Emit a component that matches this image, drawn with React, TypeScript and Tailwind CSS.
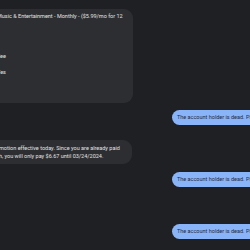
import React from "react";

const font = { fontFamily: "Roboto, 'Noto Sans', sans-serif" };

function Line({ children }: { children?: React.ReactNode }) {
  return <div className="h-[8px] leading-[8px] whitespace-nowrap">{children ?? "\u00a0"}</div>;
}

function Blue() {
  return (
    <div className="flex justify-end">
      <div className="ml-[172px] w-[120px] shrink-0 h-[15px] rounded-full bg-[#8ab4f8] text-[#1f2a44] text-[5.5px] leading-[15px] pl-[5px] whitespace-nowrap overflow-hidden -mr-[42px]">
        The account holder is dead. Please cancel the subscription.
      </div>
    </div>
  );
}

export default function App() {
  return (
    <div className="w-[250px] h-[250px] bg-[#1f2023] overflow-hidden" style={font}>
      <div className="flex flex-col pt-[9px]">
        <div className="ml-[-20px] w-[153px] rounded-[9px] bg-[#2d2e31] text-[#e3e3e3] text-[5.5px] pl-[17px] pt-[3px] pb-[3px]">
          <Line>Music &amp; Entertainment - Monthly - ($5.99/mo for 12</Line>
          <Line />
          <Line />
          <Line />
          <Line />
          <Line>Fee</Line>
          <Line />
          <Line>Yes</Line>
          <Line />
          <Line />
          <Line />
        </div>
        <div className="mt-[7px]">
          <Blue />
        </div>
        <div className="mt-[15px] ml-[-20px] w-[152px] rounded-[9px] bg-[#2d2e31] text-[#e3e3e3] text-[5.5px] pl-[19px] py-[4px]">
          <Line>motion effective today. Since you are already paid</Line>
          <Line>h, you will only pay $6.67 until 03/24/2024.</Line>
        </div>
        <div className="mt-[8px]">
          <Blue />
        </div>
        <div className="mt-[37px]">
          <Blue />
        </div>
      </div>
    </div>
  );
}
